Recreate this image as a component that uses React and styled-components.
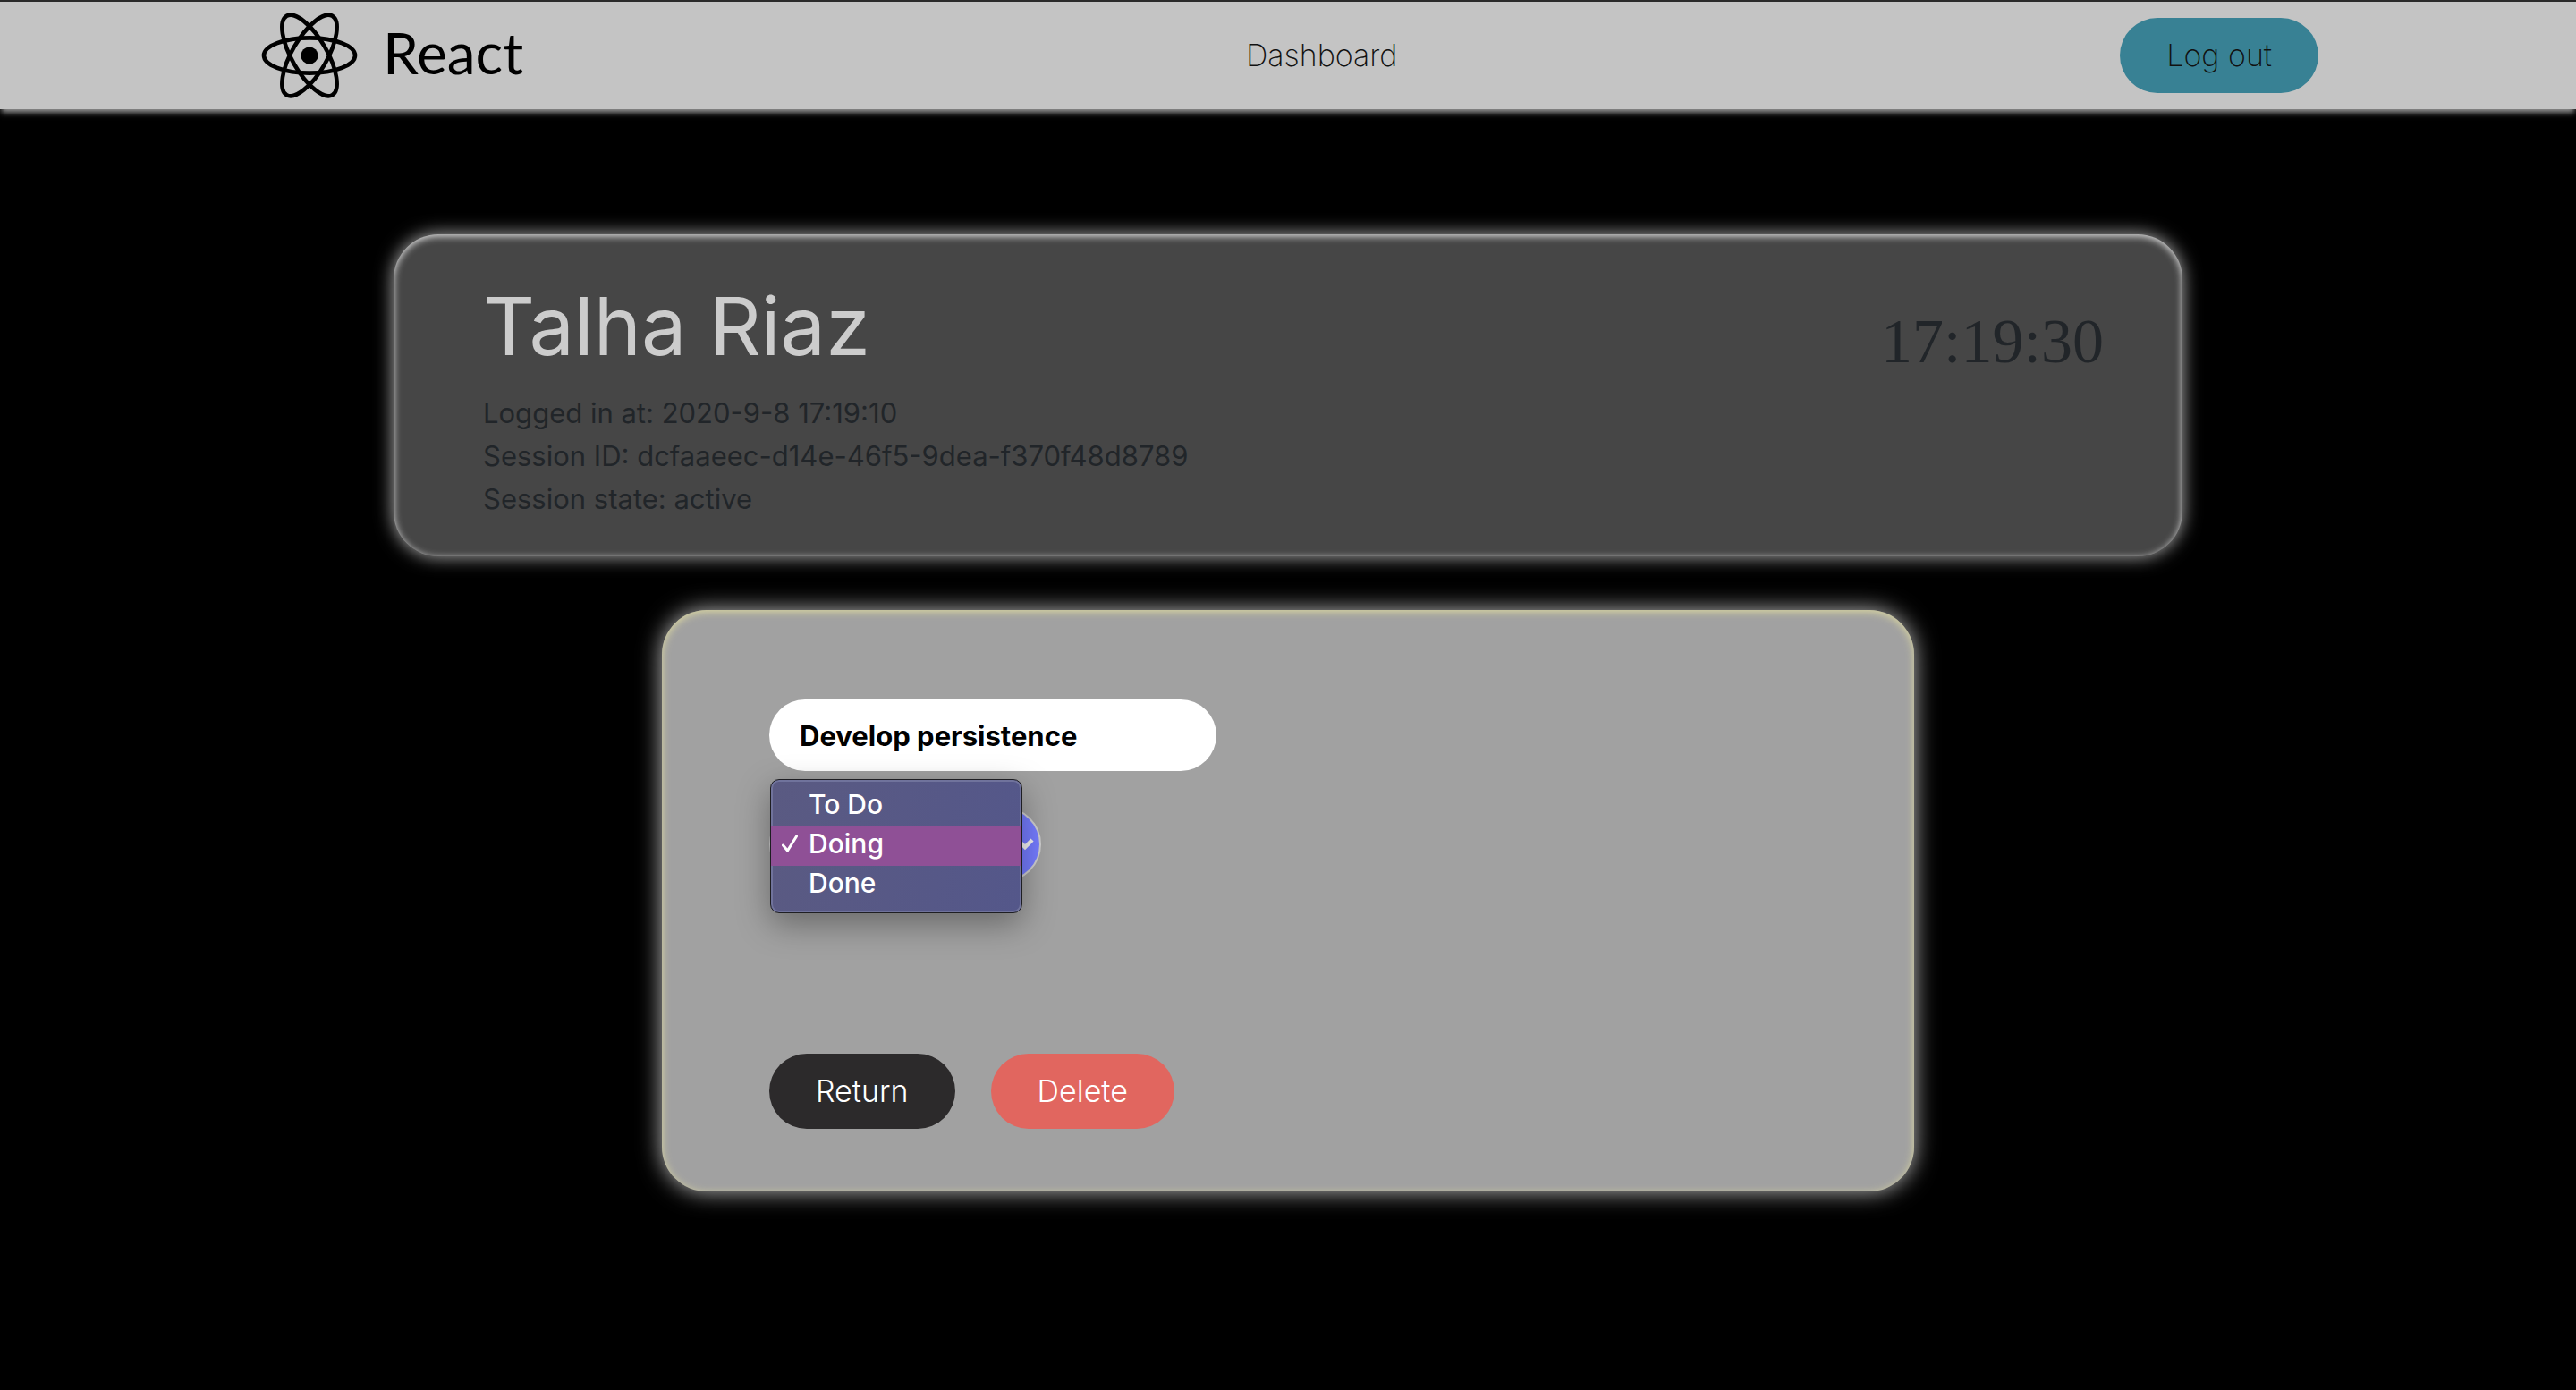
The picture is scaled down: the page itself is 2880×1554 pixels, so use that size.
import React, { useState } from "react";
import styled, { createGlobalStyle, css } from "styled-components";

const sans = `Inter, "Liberation Sans", sans-serif`;
const brandFont = `Lato, "Liberation Sans", sans-serif`;

const GlobalStyle = createGlobalStyle`
  *, *::before, *::after { box-sizing: border-box; }
  body {
    margin: 0;
    min-height: 100vh;
    background: #000;
    color: #212529;
    font-family: ${sans};
    font-size: 31px;
    line-height: 48px;
  }
`;

const Header = styled.header`
  display: flex;
  align-items: center;
  justify-content: space-between;
  height: 122px;
  padding: 0 10%;
  border-top: 2px solid #2a2a2a;
  background: #c4c4c4;
  box-shadow: 0 6px 6px -2px #909090;
`;

const Brand = styled.a`
  display: flex;
  align-items: center;
  gap: 24px;
  color: #000;
  font-family: ${brandFont};
  font-size: 64px;
  line-height: 64px;
  text-decoration: none;
`;

const Wordmark = styled.span`
  padding-bottom: 6px;
`;

const Atom = styled.svg`
  display: block;
  width: 116px;
  height: 108px;
`;

const NavLink = styled.a`
  color: #111;
  font-size: 34px;
  font-weight: 200;
  text-decoration: none;
`;

const Button = styled.button`
  height: 84px;
  padding: 0 52px;
  border: 0;
  border-radius: 42px;
  background: ${({ $bg }) => $bg};
  color: ${({ $color }) => $color || "#fff"};
  font-family: ${sans};
  font-size: 34px;
  font-weight: ${({ $weight }) => $weight || 300};
  line-height: 48px;
`;

const Main = styled.main`
  display: flex;
  flex-direction: column;
  align-items: center;
  gap: 60px;
  padding: 140px 0 60px;
`;

const ProfileCard = styled.section`
  display: flex;
  align-items: flex-start;
  justify-content: space-between;
  width: calc(100% - 880px);
  min-width: 1100px;
  padding: 40px 88px 40px 100px;
  border-radius: 50px;
  background: #464646;
  box-shadow: 0 0 20px #b4b4b4, inset 0 2px 8px #e6e6e6;
`;

const Name = styled.h1`
  margin: 0 0 10px;
  color: #ccc;
  font-size: 90px;
  font-weight: 400;
  line-height: 126px;
`;

const Detail = styled.p`
  margin: 0;
`;

const Clock = styled.time`
  padding-top: 40px;
  font-family: "Liberation Serif", serif;
  font-size: 70px;
  line-height: 80px;
`;

const TaskCard = styled.form`
  display: flex;
  flex-direction: column;
  align-items: flex-start;
  width: 1400px;
  max-width: 100%;
  padding: 100px 120px 70px;
  border-radius: 50px;
  background: #a1a1a1;
  box-shadow: 0 0 26px #bbb, inset 0 2px 10px #dcd8a0;
`;

const TitleInput = styled.input`
  width: 500px;
  height: 80px;
  padding: 0 34px;
  border: 0;
  border-radius: 40px;
  background: #fff;
  color: #000;
  font-family: ${sans};
  font-size: 31px;
  font-weight: 700;
`;

const StatusField = styled.div`
  position: relative;
  display: flex;
  align-items: center;
  margin-top: 40px;
  margin-bottom: 192px;
`;

const StatusSelect = styled.select`
  width: 304px;
  height: 84px;
  padding: 0 44px;
  border: 2px solid #cfcfcf;
  border-radius: 42px;
  background: #757cff;
  color: #fff;
  font-family: ${sans};
  font-size: 31px;
  appearance: none;
`;

const Chevron = styled.svg`
  position: absolute;
  right: 8px;
  width: 20px;
  height: 14px;
  pointer-events: none;
`;

const Menu = styled.ul`
  position: absolute;
  top: -31px;
  left: 1px;
  width: 282px;
  margin: 0;
  padding: 8px 0;
  border: 1px solid #1e1e22;
  border-radius: 10px;
  background: linear-gradient(100deg, #5a5a82, #54578a);
  box-shadow: inset 0 0 0 2px #70739c, 0 12px 36px rgba(0, 0, 0, 0.35);
  color: #fff;
  font-size: 30px;
  font-weight: 500;
  line-height: 38px;
  list-style: none;
`;

const MenuItem = styled.li`
  display: flex;
  align-items: center;
  height: 44px;
  gap: 12px;
  padding: 0 12px 6px;
  ${({ $active }) =>
    $active &&
    css`
      background: #8f5096;
    `}
`;

const Tick = styled.svg`
  width: 18px;
  height: 20px;
  visibility: ${({ $shown }) => ($shown ? "visible" : "hidden")};
`;

const Actions = styled.div`
  display: flex;
  gap: 40px;
`;

const statuses = ["To Do", "Doing", "Done"];

export default function App() {
  const [title, setTitle] = useState("Develop persistence");
  const [status, setStatus] = useState("Doing");

  return (
    <>
      <GlobalStyle />
      <Header>
        <Brand href="#">
          <Atom viewBox="-58 -54 116 108" fill="none" stroke="#000" strokeWidth="4.6" aria-hidden="true">
            <circle r="9.6" fill="#000" stroke="none" />
            <ellipse rx="51" ry="19.6" />
            <ellipse rx="51" ry="19.6" transform="rotate(60)" />
            <ellipse rx="51" ry="19.6" transform="rotate(120)" />
          </Atom>
          <Wordmark>React</Wordmark>
        </Brand>
        <NavLink href="#">Dashboard</NavLink>
        <Button type="button" $bg="#388194" $color="#111" $weight={200}>
          Log out
        </Button>
      </Header>
      <Main>
        <ProfileCard>
          <div>
            <Name>Talha Riaz</Name>
            <Detail>Logged in at: 2020-9-8 17:19:10</Detail>
            <Detail>Session ID: dcfaaeec-d14e-46f5-9dea-f370f48d8789</Detail>
            <Detail>Session state: active</Detail>
          </div>
          <Clock>17:19:30</Clock>
        </ProfileCard>
        <TaskCard onSubmit={(e) => e.preventDefault()}>
          <TitleInput
            aria-label="Task title"
            value={title}
            onChange={(e) => setTitle(e.target.value)}
          />
          <StatusField>
            <StatusSelect
              aria-label="Task status"
              value={status}
              onChange={(e) => setStatus(e.target.value)}
            >
              {statuses.map((s) => (
                <option key={s}>{s}</option>
              ))}
            </StatusSelect>
            <Chevron viewBox="0 0 20 14" fill="none" stroke="#f4f4f4" strokeWidth="4.5" aria-hidden="true">
              <path d="M2 2l8 8 8-8" />
            </Chevron>
            <Menu role="listbox" aria-label="Task status options">
              {statuses.map((s) => (
                <MenuItem
                  key={s}
                  role="option"
                  aria-selected={s === status}
                  $active={s === status}
                  onClick={() => setStatus(s)}
                >
                  <Tick $shown={s === status} viewBox="0 0 18 20" fill="none" stroke="#fff" strokeWidth="3" strokeLinecap="round" strokeLinejoin="round" aria-hidden="true">
                    <path d="M1.5 12l5 6L16.5 2" />
                  </Tick>
                  {s}
                </MenuItem>
              ))}
            </Menu>
          </StatusField>
          <Actions>
            <Button type="button" $bg="#2c2a2b">Return</Button>
            <Button type="button" $bg="#e1665f">Delete</Button>
          </Actions>
        </TaskCard>
      </Main>
    </>
  );
}
